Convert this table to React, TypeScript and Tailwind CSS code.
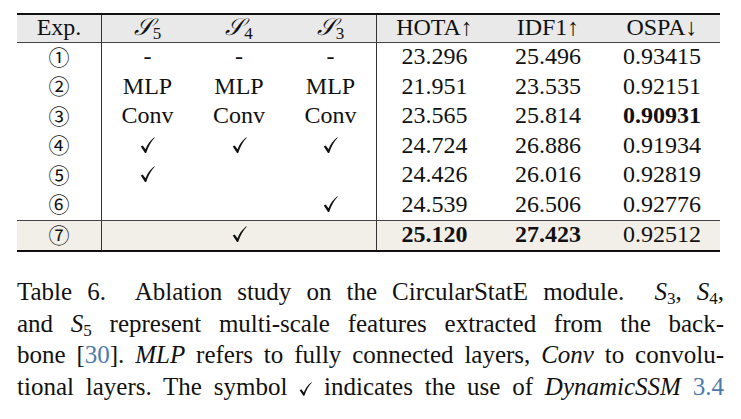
import React from 'react';

const cols = 'grid grid-cols-[85px_91px_92px_92px_115px_112px_116px]';

type Row = {
  exp: string;
  s: [React.ReactNode, React.ReactNode, React.ReactNode];
  hota: string;
  idf1: string;
  ospa: string;
  bold?: ('hota' | 'idf1' | 'ospa')[];
};

// LaTeX-style \checkmark
const Check = ({ className = 'w-[15px] h-[18px]' }: { className?: string }) => (
  <svg viewBox="0 0 16 18" className={className} fill="#111">
    <path d="M0.8 10.6 L2.9 9.4 L5.9 13.4 C7.8 8.4 10.6 4.2 15.2 0.6 L15.7 1.2 C11.8 5 9 10.2 6.6 17.4 L5.3 17.4 Z" />
  </svg>
);

const rows: Row[] = [
  { exp: '①', s: ['-', '-', '-'], hota: '23.296', idf1: '25.496', ospa: '0.93415' },
  { exp: '②', s: ['MLP', 'MLP', 'MLP'], hota: '21.951', idf1: '23.535', ospa: '0.92151' },
  { exp: '③', s: ['Conv', 'Conv', 'Conv'], hota: '23.565', idf1: '25.814', ospa: '0.90931', bold: ['ospa'] },
  { exp: '④', s: [<Check />, <Check />, <Check />], hota: '24.724', idf1: '26.886', ospa: '0.91934' },
  { exp: '⑤', s: [<Check />, '', ''], hota: '24.426', idf1: '26.016', ospa: '0.92819' },
  { exp: '⑥', s: ['', '', <Check />], hota: '24.539', idf1: '26.506', ospa: '0.92776' },
];

const S = ({ n }: { n: number }) => (
  <span>
    <span className="font-['DejaVu_Serif',serif] italic">𝒮</span>
    <span className="text-[17px] relative top-[4px]">{n}</span>
  </span>
);

const cell = 'flex items-center justify-center';
const circ = "font-['Noto_Sans_CJK_SC',sans-serif] text-[21px] pb-[3px]";

function DataRow({ r }: { r: Row }) {
  const b = (k: 'hota' | 'idf1' | 'ospa') => (r.bold?.includes(k) ? 'font-bold' : '');
  return (
    <div className={`${cols} h-[29.5px]`}>
      <div className={`${cell} border-r border-[#333] ${circ}`}>{r.exp}</div>
      {r.s.map((v, i) => (
        <div key={i} className={`${cell} pb-[3px] ${i === 2 ? 'border-r border-[#333]' : ''}`}>{v}</div>
      ))}
      <div className={`${cell} pb-[3px] ${b('hota')}`}>{r.hota}</div>
      <div className={`${cell} pb-[3px] ${b('idf1')}`}>{r.idf1}</div>
      <div className={`${cell} pb-[3px] ${b('ospa')}`}>{r.ospa}</div>
    </div>
  );
}

const Blue = ({ children }: { children: React.ReactNode }) => <span className="text-[#4b7bab]">{children}</span>;
const Si = ({ n }: { n: number }) => (
  <span>
    <i>S</i>
    <span className="text-[17px] relative top-[4px]">{n}</span>
  </span>
);

const line = 'text-justify [text-align-last:justify] whitespace-pre-wrap h-[31.5px]';

export default function App() {
  return (
    <div className="w-[741px] h-[419px] bg-white pl-[17px] pt-[13px] text-[#111] font-['Liberation_Serif',serif] text-[24px] leading-none">
      <div className="w-[703px] border-t-2 border-b-2 border-[#111]">
        <div className={`${cols} h-[28px] bg-[#e9e9e9] border-b border-[#444]`}>
          <div className={`${cell} border-r border-[#333] pb-[3px]`}>Exp.</div>
          <div className={`${cell} pb-[3px]`}><S n={5} /></div>
          <div className={`${cell} pb-[3px]`}><S n={4} /></div>
          <div className={`${cell} pb-[3px] border-r border-[#333]`}><S n={3} /></div>
          <div className={`${cell} pb-[3px]`}>HOTA↑</div>
          <div className={`${cell} pb-[3px]`}>IDF1↑</div>
          <div className={`${cell} pb-[3px]`}>OSPA↓</div>
        </div>
        {rows.map((r) => (
          <DataRow key={r.exp} r={r} />
        ))}
        <div className={`${cols} h-[30px] bg-[#f2efe9] border-t border-[#444]`}>
          <div className={`${cell} border-r border-[#333] ${circ}`}>⑦</div>
          <div className={cell}></div>
          <div className={`${cell} pb-[3px]`}><Check /></div>
          <div className={`${cell} border-r border-[#333]`}></div>
          <div className={`${cell} pb-[3px] font-bold`}>25.120</div>
          <div className={`${cell} pb-[3px] font-bold`}>27.423</div>
          <div className={`${cell} pb-[3px]`}>0.92512</div>
        </div>
      </div>
      <div className="w-[707px] mt-[24px] leading-[31.5px] text-[25px]">
        <div className={line}>Table 6.  Ablation study on the CircularStatE module.  <Si n={3} />, <Si n={4} />,</div>
        <div className={line}>and <Si n={5} /> represent multi-scale features extracted from the back-</div>
        <div className={line}>bone [<Blue>30</Blue>]. <i>MLP</i> refers to fully connected layers, <i>Conv</i> to convolu-</div>
        <div className={line}>tional layers. The symbol <Check className="inline-block w-[13px] h-[16px] align-[-2px]" /> indicates the use of <i>DynamicSSM</i> <Blue>3.4</Blue></div>
      </div>
    </div>
  );
}
